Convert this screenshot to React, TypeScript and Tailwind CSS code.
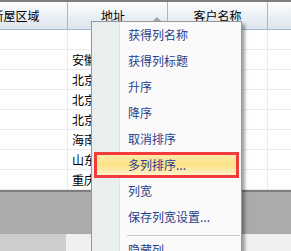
import React from "react";

const rows = ["", "安徽", "北京", "北京", "北京", "海南", "山东", "重庆"];
const items = ["获得列名称", "获得列标题", "升序", "降序", "取消排序", "多列排序...", "列宽", "保存列宽设置..."];

export default function App() {
  return (
    <div
      className="relative w-[291px] h-[251px] overflow-hidden bg-white text-[12px] leading-none text-black"
      style={{ fontFamily: '"Noto Sans CJK SC", "Noto Sans", sans-serif' }}
    >
      <div className="flex flex-col h-full">
        <div className="h-[2px] bg-[#7f7f7f]" />
        {/* header */}
        <div className="flex h-[28px] -ml-[36px] border-b border-[#a9b9cd] bg-gradient-to-b from-[#fcfdfe] to-[#dce4ee]">
          <div className="w-[104px] shrink-0 flex items-center justify-center border-r border-[#a7b8cc]">新屋区域</div>
          <div className="relative w-[100px] shrink-0 flex items-center justify-center pr-[9px] border-r border-[#a7b8cc]">
            地址
            <span className="absolute right-[6px] top-[15px] w-0 h-0 border-l-[4px] border-r-[4px] border-b-[4px] border-l-transparent border-r-transparent border-b-[#9aa3ad]" />
          </div>
          <div className="w-[100px] shrink-0 flex items-center justify-center border-r border-[#a7b8cc]">客户名称</div>
          <div className="flex-1" />
        </div>
        {/* rows */}
        <div className="flex flex-col -ml-[36px]">
          {rows.map((r, i) => (
            <div key={i} className="flex h-[20px] border-b border-[#ebebeb]">
              <div className="w-[104px] shrink-0 border-r border-[#ebebeb]" />
              <div className="w-[100px] shrink-0 border-r border-[#ebebeb] flex items-center pl-[4px] whitespace-nowrap overflow-hidden">{r}</div>
              <div className="w-[100px] shrink-0 border-r border-[#ebebeb]" />
              <div className="flex-1" />
            </div>
          ))}
        </div>
        <div className="h-[2px] bg-[#7d7d7d]" />
        <div className="h-[42px] bg-[#ababab]" />
        <div className="flex-1 flex bg-[#f0f0f0]">
          <div className="w-[66px] bg-[#cdcdcd]" />
        </div>
      </div>

      {/* context menu */}
      <div className="absolute left-[91px] top-[21px] w-[151px] h-[250px] border border-[#979797] shadow-[3px_3px_3px_rgba(0,0,0,0.35)] flex flex-col text-[#24408e] bg-[linear-gradient(to_right,#e9eeee_0,#e9eeee_27px,#dde2e2_27px,#dde2e2_28px,#fafafa_28px)]">
        {items.map((t, i) =>
          i === 5 ? (
            <div key={t} className="h-[26px] mx-[2px] border-[3px] border-[#f03c3c] bg-gradient-to-b from-[#fdeaa8] via-[#fde187] to-[#fff4cc] flex items-center pl-[31px] whitespace-nowrap">
              {t}
            </div>
          ) : (
            <div key={t} className="h-[26px] flex items-center pl-[36px] whitespace-nowrap">{t}</div>
          )
        )}
        <div className="mt-[5px] ml-[35px] mr-[1px] h-[2px] border-t border-[#c8c8c8] border-b border-b-white" />
        <div className="h-[26px] flex items-center pl-[36px]">隐藏列</div>
      </div>
    </div>
  );
}
